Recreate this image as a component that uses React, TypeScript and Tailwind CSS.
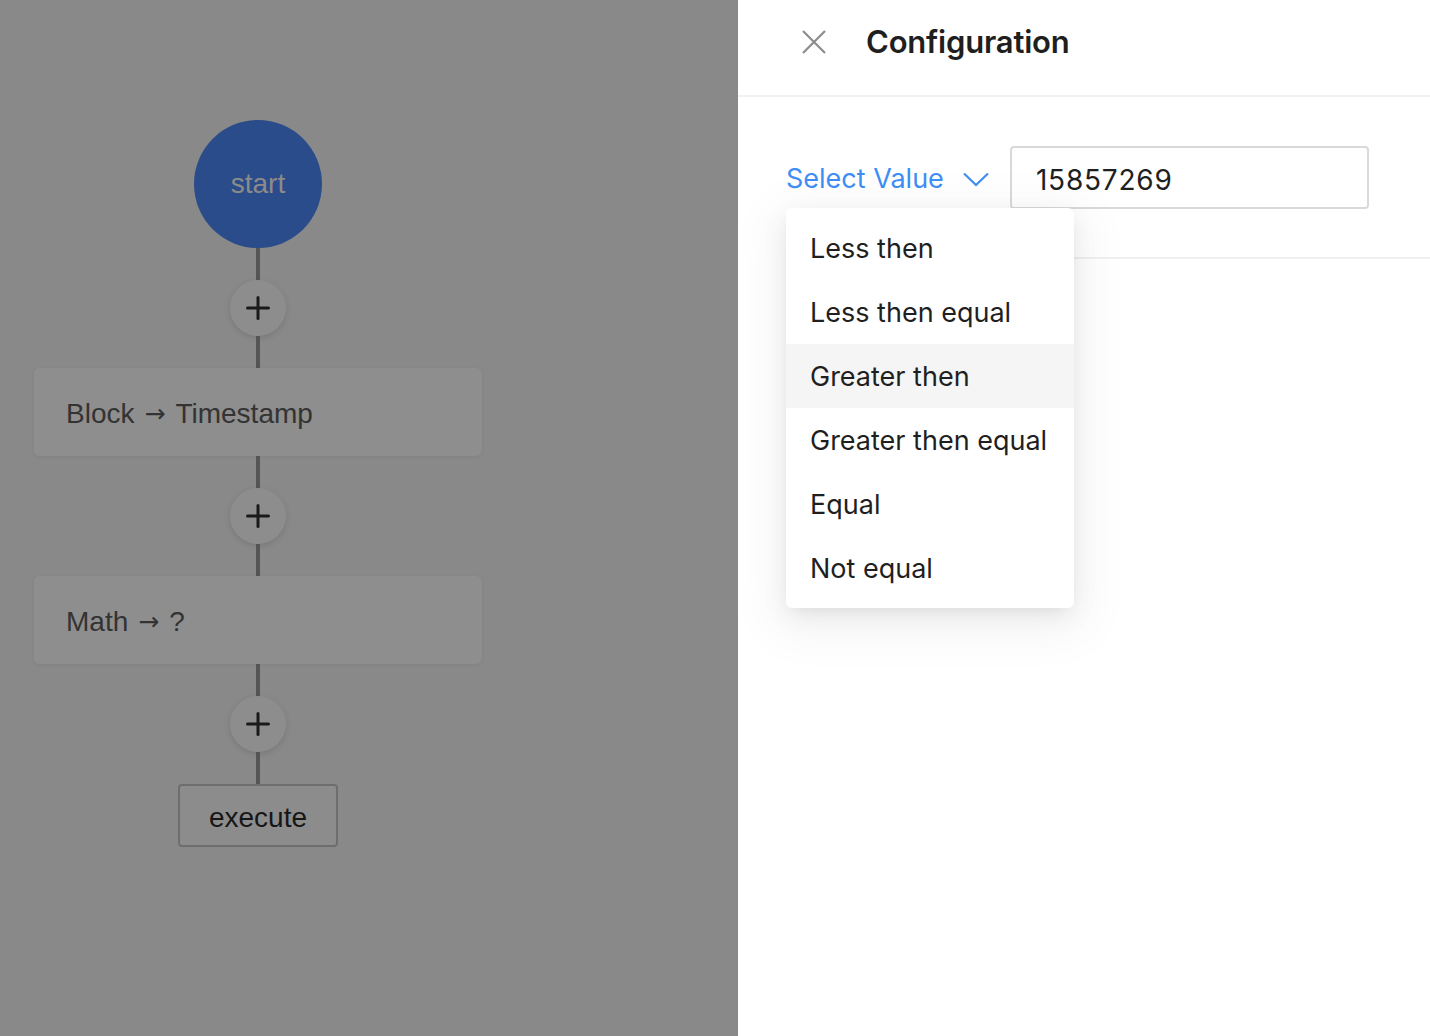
import { Plus } from 'lucide-react';

const OPCIONES = ['Less then', 'Less then equal', 'Greater then', 'Greater then equal', 'Equal', 'Not equal'];

function Linea({ h }: { h: string }) {
  return <div className={`w-1 bg-[#555555] ${h}`} />;
}

function BotonMas() {
  return (
    <div className="w-14 h-14 rounded-full bg-[#8d8d8d] shadow-[0_2px_6px_rgba(0,0,0,0.12)] flex items-center justify-center">
      <Plus size={36} strokeWidth={2} className="text-[#1a1a1a]" />
    </div>
  );
}

function Tarjeta({ origen, destino }: { origen: string; destino: string }) {
  return (
    <div className="w-[448px] h-[88px] rounded-md bg-[#8e8e8e] shadow-[0_1px_4px_rgba(0,0,0,0.06)] flex items-center pl-8 pt-1 text-[28px] text-[#333333]">
      {origen}
      <span className="mx-[10px] text-[25px] font-['DejaVu_Sans',sans-serif]">→</span>
      {destino}
    </div>
  );
}

export default function App() {
  return (
    <div className="w-[1430px] h-[1036px] flex overflow-hidden bg-white">
      {/* Lienzo con máscara */}
      <div className="w-[738px] h-full bg-[#898989] pl-[34px] pt-[120px] font-['Liberation_Sans',Arial,sans-serif]">
        <div className="w-[448px] flex flex-col items-center">
          <div className="w-32 h-32 rounded-full bg-[#2b4c8a] flex items-center justify-center text-[28px] text-[#8b8b8b]">
            start
          </div>
          <Linea h="h-8" />
          <BotonMas />
          <Linea h="h-8" />
          <Tarjeta origen="Block" destino="Timestamp" />
          <Linea h="h-8" />
          <BotonMas />
          <Linea h="h-8" />
          <Tarjeta origen="Math" destino="?" />
          <Linea h="h-8" />
          <BotonMas />
          <Linea h="h-8" />
          <div className="w-40 h-[63px] border-2 border-[#6e6e6e] rounded-sm bg-[#8c8c8c] flex items-center justify-center pt-1 text-[28px] text-[#161616]">
            execute
          </div>
        </div>
      </div>

      {/* Panel de configuración */}
      <div className="flex-1 h-full bg-white flex flex-col font-['Inter','Noto_Sans',sans-serif]">
        <div className="h-[97px] border-b-2 border-[#f0f0f0] flex items-start pt-[22px] pl-16">
          <svg width="24" height="24" viewBox="0 0 24 24" className="mt-2 text-[#8c8c8c]">
            <path d="M1 1 L23 23 M23 1 L1 23" stroke="currentColor" strokeWidth="2.2" fill="none" />
          </svg>
          <span className="ml-10 leading-10 text-[31px] font-semibold text-[#1f1f1f] tracking-[-0.2px]">Configuration</span>
        </div>
        <div className="ml-12 h-[162px] border-b-2 border-[#f0f0f0] flex items-start pt-[49px] relative">
          <div className="flex items-center h-[63px] pt-1 text-[#3f8ef5] text-[27px]">
            <span>Select Value</span>
            <svg width="26" height="15" viewBox="0 0 26 15" className="ml-[19px]">
              <path d="M1 1.5 L13 13 L25 1.5" stroke="currentColor" strokeWidth="2.2" fill="none" />
            </svg>
          </div>
          <div className="ml-[21px] w-[359px] h-[63px] border-2 border-[#d9d9d9] rounded-sm flex items-center pl-6 pt-1 text-[28px] tracking-[0.8px] text-[#1f1f1f]">
            15857269
          </div>
          <div className="absolute left-0 top-[111px] w-[288px] py-2 bg-white rounded-md shadow-[0_12px_48px_16px_rgba(0,0,0,0.04),0_9px_28px_0_rgba(0,0,0,0.06),0_6px_16px_-8px_rgba(0,0,0,0.1)] z-10">
            {OPCIONES.map((op) => (
              <div
                key={op}
                className={`h-16 flex items-center pl-6 pt-0.5 text-[27px] text-[#1f1f1f] ${op === 'Greater then' ? 'bg-[#f5f5f5]' : ''}`}
              >
                {op}
              </div>
            ))}
          </div>
        </div>
      </div>
    </div>
  );
}
